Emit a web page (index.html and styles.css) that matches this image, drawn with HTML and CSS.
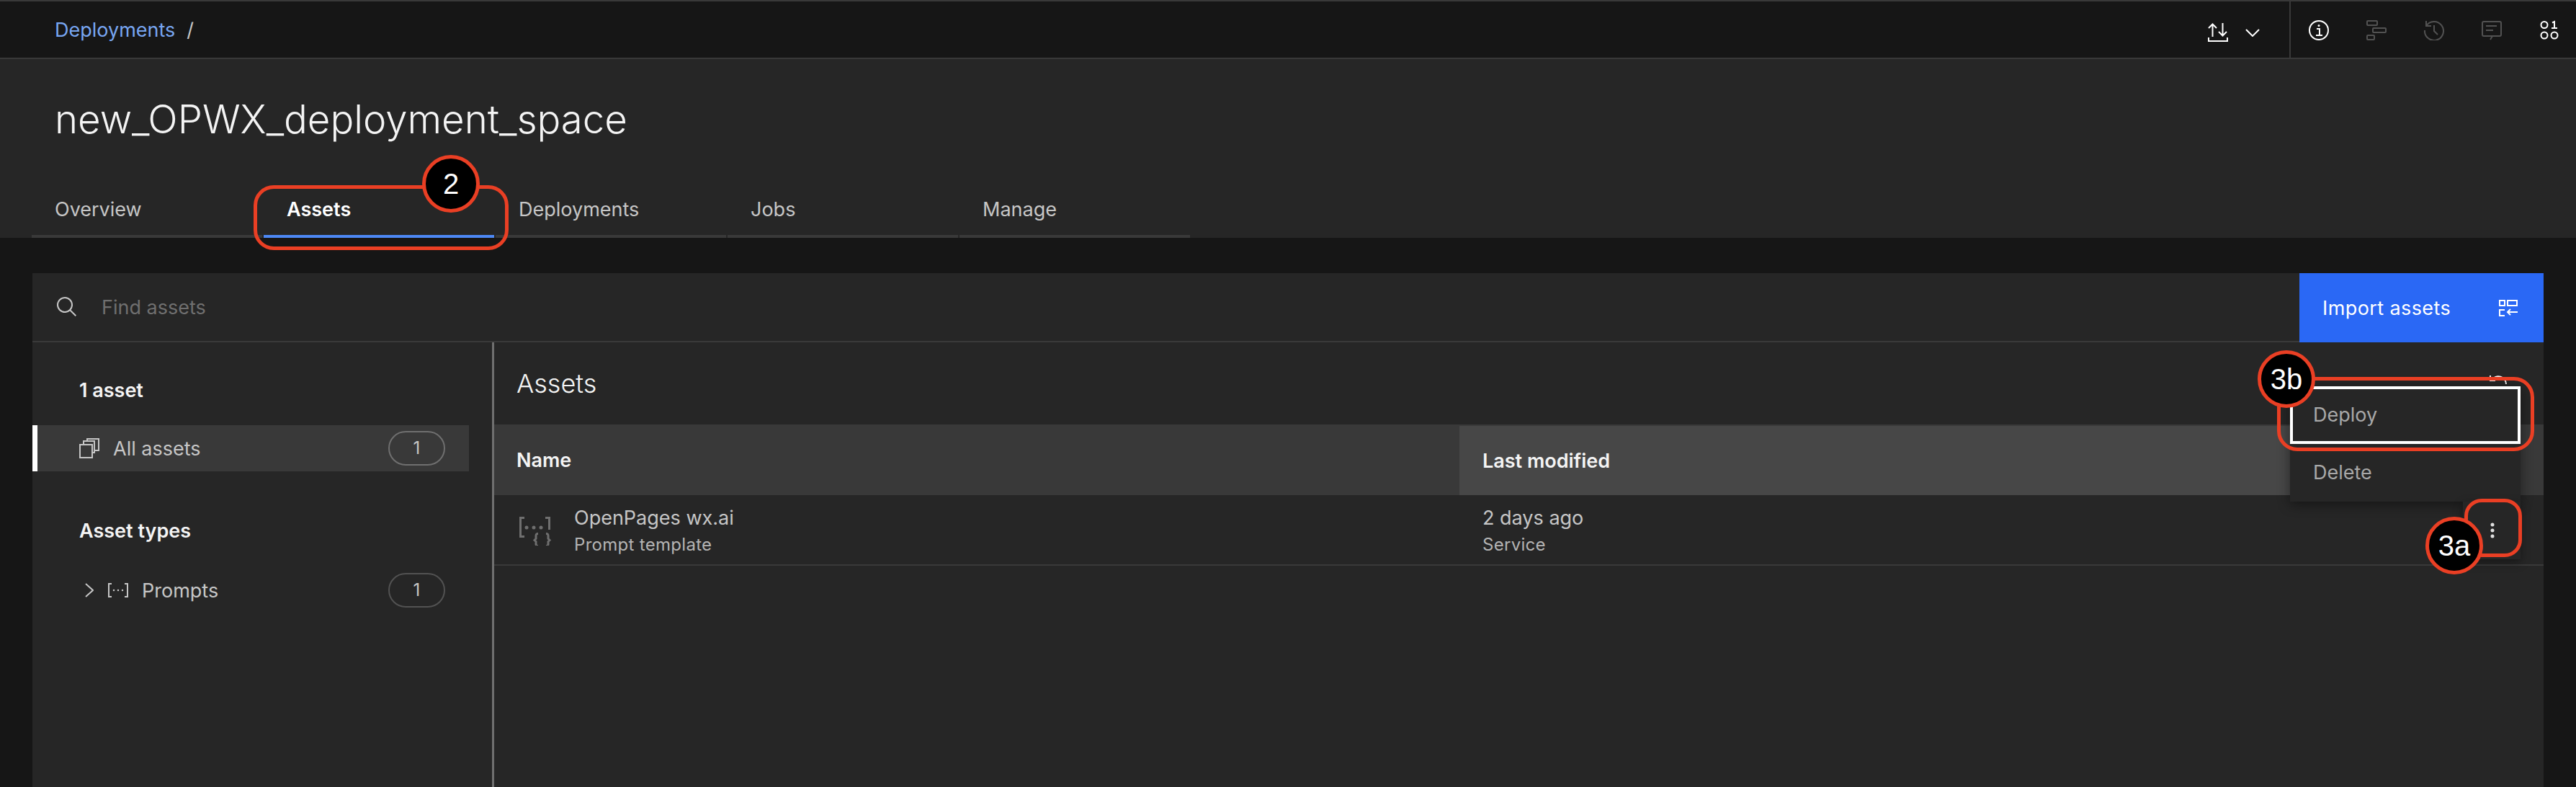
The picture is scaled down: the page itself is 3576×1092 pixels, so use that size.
FILE: index.html
```html
<!DOCTYPE html>
<html lang="en">
<head>
<meta charset="utf-8">
<title>new_OPWX_deployment_space</title>
<link rel="stylesheet" href="styles.css">
</head>
<body>
<header class="topbar">
  <nav class="crumbs"><a class="crumb-link">Deployments</a><span class="crumb-sep">/</span></nav>
  <div class="top-actions">
    <div class="transfer">
      <svg class="ic-transfer" viewBox="0 0 28 26" fill="none" stroke="#fff" stroke-width="2"><path d="M6.500 19V1.500M1 7l5.500-5.500L12 7M20.500 0v17.500M15 12l5.500 5.500L26 12M1 20v5h26v-5"/></svg>
      <svg class="ic-chev" viewBox="0 0 20 11" fill="none" stroke="#fff" stroke-width="2"><path d="M1 1l9 9 9-9"/></svg>
    </div>
    <div class="tools">
      <svg class="tool" viewBox="0 0 28 28" fill="none" stroke="#fff" stroke-width="2"><circle cx="14" cy="14" r="13"/><path d="M11 12h4v9M10 21h9"/><circle cx="14" cy="7.500" r="1.500" fill="#fff" stroke="none"/></svg>
      <svg class="tool" viewBox="0 0 28 28" fill="none" stroke="#525252" stroke-width="2"><rect x="1" y="1" width="14" height="6" rx="1"/><rect x="9" y="11" width="18" height="6" rx="1"/><rect x="1" y="21" width="10" height="6" rx="1"/></svg>
      <svg class="tool" viewBox="0 0 28 28" fill="none" stroke="#525252" stroke-width="2"><path d="M3 8A13 13 0 1 1 1 14M3 1v7h7M14 7v8l5 5"/></svg>
      <svg class="tool" viewBox="0 0 28 28" fill="none" stroke="#525252" stroke-width="2"><path d="M15 22h10a2 2 0 0 0 2-2V4a2 2 0 0 0-2-2H3a2 2 0 0 0-2 2v16a2 2 0 0 0 2 2h12l-3 5M6 8h15M6 14h10"/></svg>
      <svg class="tool tool-last" viewBox="0 0 28 28" fill="none" stroke="#fff" stroke-width="2"><ellipse cx="7" cy="6.500" rx="4.500" ry="4.500"/><circle cx="7" cy="21" r="4.500"/><circle cx="21" cy="21" r="4.500"/><path d="M18 3.500l3-1.500v9M17 11h8"/></svg>
    </div>
  </div>
</header>

<section class="page-head">
  <h1 class="page-title">new_OPWX_deployment_space</h1>
  <div class="tabs">
    <div class="tab">Overview</div>
    <div class="tab tab-active">Assets</div>
    <div class="tab">Deployments</div>
    <div class="tab">Jobs</div>
    <div class="tab">Manage</div>
  </div>
</section>

<main class="workspace">
  <div class="panel">
    <div class="searchbar">
      <svg class="ic-search" viewBox="0 0 32 32" fill="#c6c6c6"><path d="M29 27.586l-7.552-7.552a11.018 11.018 0 1 0-1.414 1.414L27.586 29zM4 13a9 9 0 1 1 9 9 9.01 9.01 0 0 1-9-9z"/></svg>
      <span class="search-text">Find assets</span>
      <button class="import-btn"><span>Import assets</span>
        <svg class="ic-import" viewBox="0 0 26 23" fill="none" stroke="#fff" stroke-width="2"><rect x="1" y="1" width="7" height="7"/><rect x="12" y="1" width="13" height="7"/><path d="M8 14H1v8h7M26 17H12M16 13l-4 4 4 4"/></svg>
      </button>
    </div>
    <div class="content">
      <aside class="sidebar">
        <div class="side-title side-title-first">1 asset</div>
        <div class="side-row side-row-active">
          <svg class="ic-copy" viewBox="0 0 28 28" fill="none" stroke="#c6c6c6" stroke-width="2"><rect x="1" y="9" width="17" height="18"/><path d="M6 9V4h15v16h-3M11 4V1h16v16h-6"/></svg>
          <span class="side-label">All assets</span>
          <span class="count">1</span>
        </div>
        <div class="side-title side-title-second">Asset types</div>
        <div class="side-row">
          <svg class="ic-expand" viewBox="0 0 12 20" fill="none" stroke="#c6c6c6" stroke-width="2"><path d="M1 1l10 9-10 9"/></svg>
          <svg class="ic-prompt" viewBox="0 0 28 20" fill="none" stroke="#c6c6c6" stroke-width="2"><path d="M5 1H1v18h4M23 1h4v18h-4"/><g fill="#c6c6c6" stroke="none"><circle cx="8" cy="10" r="1.250"/><circle cx="14" cy="10" r="1.250"/><circle cx="20" cy="10" r="1.250"/></g></svg>
          <span class="side-label">Prompts</span>
          <span class="count count-dim">1</span>
        </div>
      </aside>
      <section class="main">
        <div class="main-head"><h2 class="main-title">Assets</h2>
          <svg class="ic-refresh" viewBox="0 0 28 28" fill="none" stroke="#f4f4f4" stroke-width="2"><path d="M25 13A11 11 0 0 0 5 7M3 1v7h7"/></svg>
        </div>
        <div class="thead">
          <div class="th th-name">Name</div>
          <div class="th th-modified">Last modified</div>
          <div class="th th-actions"></div>
        </div>
        <div class="trow">
          <div class="td td-name">
            <svg class="ic-template" viewBox="0 0 45 40" fill="none" stroke="#6f6f6f" stroke-width="3"><path d="M7 1.500H1.500v26H7M36 1.500h5.500V18"/><g fill="#6f6f6f" stroke="none"><circle cx="10" cy="15" r="2.500"/><circle cx="20" cy="15" r="2.500"/><circle cx="30" cy="15" r="2.500"/></g><path d="M26 23.500c-3 0-3 1-3 3v4l-2 2 2 2v3c0 2 0 3 3 3M37 23.500c3 0 3 1 3 3v4l2 2-2 2v3c0 2 0 3-3 3"/></svg>
            <div class="stack"><div class="primary">OpenPages wx.ai</div><div class="secondary">Prompt template</div></div>
          </div>
          <div class="td td-modified">
            <div class="stack"><div class="primary">2 days ago</div><div class="secondary">Service</div></div>
          </div>
        </div>
      </section>
    </div>
  </div>
</main>

<div class="menu">
  <div class="menu-item menu-item-focus">Deploy</div>
  <div class="menu-item">Delete</div>
</div>
<div class="menu-trigger"><svg class="ic-dots" viewBox="0 0 6 22" fill="#e0e0e0"><circle cx="3" cy="3" r="2.500"/><circle cx="3" cy="11" r="2.500"/><circle cx="3" cy="19" r="2.500"/></svg></div>

<div class="mark mark-tab"></div>
<div class="mark mark-deploy"></div>
<div class="mark mark-dots"></div>
<div class="step step-2">2</div>
<div class="step step-3b">3b</div>
<div class="step step-3a">3a</div>
</body>
</html>
```

FILE: styles.css
```css
* { box-sizing: border-box; }
html, body { height: 100%; }
body {
  margin: 0;
  height: 1092px;
  overflow: hidden;
  position: relative;
  background: #161616;
  color: #f4f4f4;
  font-family: "Inter", "Noto Sans", sans-serif;
  font-size: 27px;
}
h1, h2 { margin: 0; font-weight: 300; }
svg { display: block; flex: none; }

/* top bar */
.topbar {
  height: 82px;
  display: flex;
  justify-content: space-between;
  background: #161616;
  border-top: 2px solid #393939;
  border-bottom: 2px solid #393939;
}
.crumbs { display: flex; align-items: center; padding-left: 76px; }
.crumb-link { color: #78a6f2; }
.crumb-sep { margin-left: 16px; color: #c6c6c6; }
.top-actions { display: flex; height: 78px; }
.transfer { display: flex; align-items: center; gap: 24px; padding-right: 41px; border-right: 2px solid #393939; }
.ic-transfer { width: 28px; height: 26px; margin-top: 8px; }
.ic-chev { width: 20px; height: 11px; margin-top: 8px; }
.tools { display: flex; align-items: center; gap: 52px; padding-left: 25px; padding-right: 23px; }
.tool { width: 28px; height: 28px; margin-top: 2px; }

/* page head */
.page-head { height: 248px; background: #262626; padding-top: 48px; }
.page-title { height: 70px; line-height: 70px; padding-left: 76px; font-size: 54.500px; color: #f4f4f4; }
.tabs { display: flex; gap: 2px; margin-top: 56px; padding-left: 44px; }
.tab {
  width: 320px;
  height: 74px;
  padding-left: 32px;
  line-height: 70px;
  border-bottom: 4px solid #393939;
  color: #c6c6c6;
}
.tab-active { color: #fff; font-weight: 600; border-bottom-color: #4d88f5; }

/* workspace */
.workspace { height: 762px; padding: 49px 45px 0; }
.panel { height: 713px; background: #262626; display: flex; flex-direction: column; }
.searchbar { height: 96px; display: flex; align-items: center; border-bottom: 2px solid #393939; padding-left: 32px; flex: none; }
.ic-search { width: 32px; height: 32px; margin-right: 32px; }
.search-text { color: #6f6f6f; flex: 1; }
.import-btn {
  align-self: flex-start;
  width: 339px;
  height: 96px;
  display: flex;
  align-items: center;
  justify-content: space-between;
  padding: 0 36px 0 32px;
  border: 0;
  background: #2a68f5;
  color: #fff;
  font: inherit;
  letter-spacing: .4px;
}
.ic-import { width: 26px; height: 23px; }

.content { flex: 1; display: flex; min-height: 0; }
.sidebar { width: 641px; flex: none; border-right: 3px solid #6f6f6f; }
.side-title { padding-left: 65px; height: 36px; line-height: 36px; font-weight: 600; color: #f4f4f4; }
.side-title-first { margin-top: 49px; margin-bottom: 30px; }
.side-title-second { margin-top: 65px; margin-bottom: 32px; }
.side-row {
  width: 606px;
  height: 64px;
  display: flex;
  align-items: center;
  padding-left: 65px;
  padding-right: 33px;
  color: #c6c6c6;
}
.side-row-active { background: #393939; border-left: 7px solid #fff; padding-left: 58px; }
.ic-copy { width: 28px; height: 28px; margin-right: 19px; }
.ic-expand { width: 12px; height: 20px; margin-left: 8px; margin-right: 20px; }
.ic-prompt { width: 28px; height: 20px; margin-right: 19px; }
.side-label { flex: 1; }
.count {
  width: 79px;
  height: 48px;
  border: 2px solid #6f6f6f;
  border-radius: 24px;
  text-align: center;
  line-height: 44px;
  font-size: 24px;
  color: #c6c6c6;
}
.count-dim { border-color: #525252; }

.main { flex: 1; min-width: 0; }
.main-head { height: 114px; padding-left: 31px; display: flex; align-items: center; justify-content: space-between; padding-right: 49px; }
.main-title { font-size: 36px; font-weight: 300; color: #f4f4f4; }
.ic-refresh { width: 28px; height: 28px; margin-top: 4px; }
.thead { height: 98px; display: flex; background: #393939; }
.th { font-weight: 600; color: #f4f4f4; display: flex; align-items: center; }
.th-name { width: 1340px; padding-left: 31px; }
.th-modified { width: 1374px; padding-left: 32px; background: #474747; border-top: 2px solid #393939; }
.th-actions { flex: 1; }
.trow { height: 98px; display: flex; border-bottom: 2px solid #393939; }
.td { display: flex; align-items: center; }
.td-name { width: 1340px; padding-left: 35px; }
.td-modified { flex: 1; padding-left: 32px; }
.stack { margin-top: 4px; }
.ic-template { width: 45px; height: 40px; margin-right: 31px; margin-top: 4px; }
.primary { font-size: 27px; line-height: 36px; color: #c6c6c6; }
.secondary { font-size: 24px; line-height: 34px; margin-top: 2px; letter-spacing: .3px; color: #b4b4b4; }

/* overflow menu */
.menu {
  position: absolute;
  left: 3179px;
  top: 536px;
  width: 320px;
  background: #262626;
  box-shadow: 0 4px 16px rgba(0, 0, 0, .45);
}
.menu-item { height: 80px; padding-left: 32px; line-height: 80px; color: #a8a8a8; }
.menu-item-focus { outline: 4px solid #fff; outline-offset: -4px; }
.menu-trigger {
  position: absolute;
  left: 3419px;
  top: 696px;
  width: 80px;
  height: 80px;
  background: #262626;
  box-shadow: 0 4px 12px rgba(0, 0, 0, .4);
  display: flex;
  align-items: center;
  justify-content: center;
}
.ic-dots { width: 6px; height: 22px; margin-left: 2px; }

/* annotations */
.mark { position: absolute; border: 5px solid #ea3f24; }
.mark-tab { left: 352px; top: 257px; width: 354px; height: 90px; border-radius: 28px; }
.mark-deploy { left: 3161px; top: 523px; width: 357px; height: 103px; border-radius: 28px; }
.mark-dots { left: 3421px; top: 692px; width: 80px; height: 81px; border-radius: 24px; }
.step {
  position: absolute;
  width: 80px;
  height: 80px;
  border: 5px solid #ea3f24;
  border-radius: 50%;
  background: #000;
  color: #fff;
  font-family: "Liberation Sans", Arial, sans-serif;
  font-size: 40px;
  line-height: 70px;
  text-align: center;
}
.step-2 { left: 586px; top: 215px; }
.step-3b { left: 3134px; top: 486px; }
.step-3a { left: 3367px; top: 717px; }
```
